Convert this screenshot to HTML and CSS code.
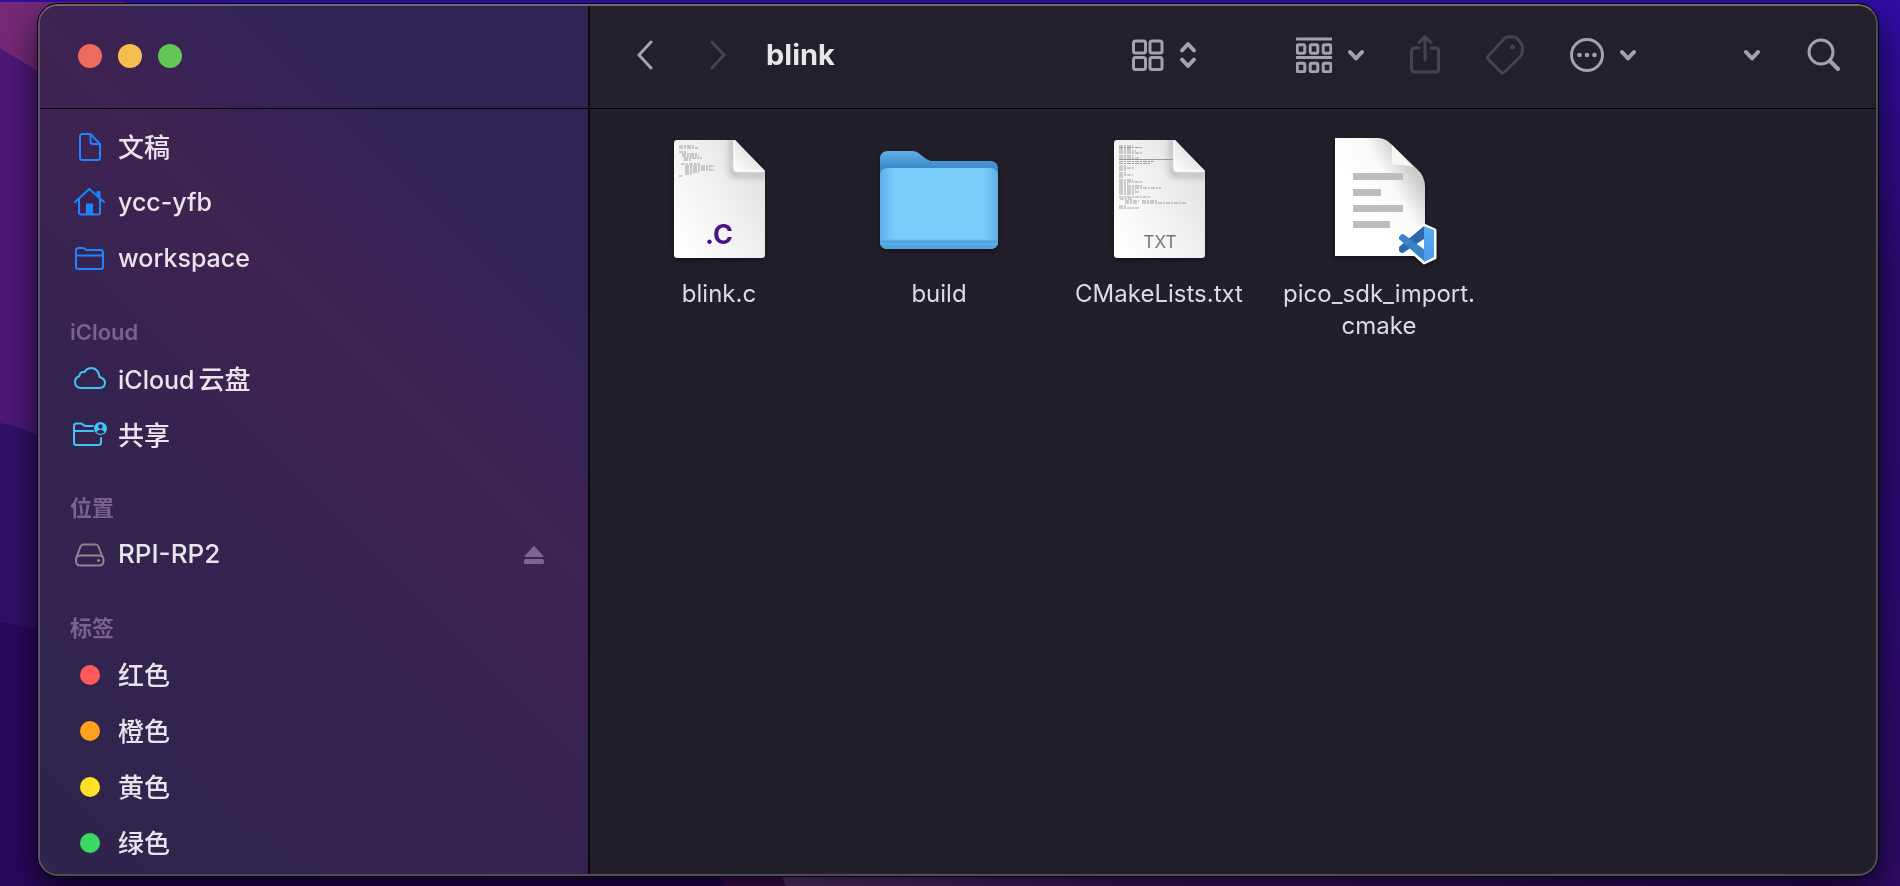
FILE: index.html
```html
<!DOCTYPE html>
<html lang="zh-CN">
<head>
    <meta charset="UTF-8">
    <meta name="viewport" content="width=device-width, initial-scale=1.0">
    <title>blink</title>
    <link rel="stylesheet" href="styles.css">
</head>
<body>

    <!-- Wallpaper -->
    <svg class="wallpaper" viewBox="0 0 1900 886" preserveAspectRatio="none" aria-hidden="true">
        <defs>
            <linearGradient id="wallRight" x1="0" y1="0" x2="0" y2="1">
                <stop offset="0" stop-color="#300da6"/>
                <stop offset="0.3" stop-color="#2d0a72"/>
                <stop offset="0.65" stop-color="#2c0a75"/>
                <stop offset="1" stop-color="#300a66"/>
            </linearGradient>
            <linearGradient id="wallBottom" x1="0" y1="0" x2="1" y2="0">
                <stop offset="0" stop-color="#6a4287"/>
                <stop offset="0.35" stop-color="#4a1a70"/>
                <stop offset="1" stop-color="#2d0b6a"/>
            </linearGradient>
        </defs>
        <rect width="1900" height="886" fill="url(#wallRight)"/>
        <path d="M0 2H125V886H0z" fill="#752978"/>
        <path d="M0 48L39 72 600 400V886H0z" fill="#4d1879"/>
        <path d="M0 423Q20 426 39 436L600 640V886H0z" fill="#311068"/>
        <path d="M0 622L39 630 720 800V886H0z" fill="#29085e"/>
        <path d="M718 860L724 886H800V860z" fill="#4a1260"/>
        <path d="M775 860L786 886H1800V860z" fill="url(#wallBottom)"/>
    </svg>

    <main class="window">

        <!-- Sidebar -->
        <aside class="sidebar">
            <div class="titlebar">
                <button class="light close" aria-label="关闭"></button>
                <button class="light minimize" aria-label="最小化"></button>
                <button class="light zoom" aria-label="缩放"></button>
            </div>

            <nav class="places">
                <a href="#documents" class="place blue">
                    <svg class="icon" viewBox="0 0 36 36"><path d="M18.500 5H10.500Q8 5 8 7.500V28.500Q8 31 10.500 31H25.500Q28 31 28 28.500V15L18.500 5V12.500Q18.500 15 21 15H28"/></svg>
                    <span>文稿</span>
                </a>
                <a href="#home" class="place blue">
                    <svg class="icon" viewBox="0 0 36 36"><path d="M3 17L17.300 4 32 17M7 14V27.500Q7 29.500 9 29.500H26Q28 29.500 28 27.500V14M25.500 11V7H27.500V13"/><path class="solid" d="M14 18.500H21V30H14z"/></svg>
                    <span class="latin">ycc-yfb</span>
                </a>
                <a href="#workspace" class="place blue">
                    <svg class="icon" viewBox="0 0 36 36"><path d="M4 25.500V9.500Q4 7 6.500 7H10.500Q12 7 13 8T15.500 9H28.500Q31 9 31 11.500V25.500Q31 28 28.500 28H6.500Q4 28 4 25.500zM4 14.500H31"/></svg>
                    <span class="latin">workspace</span>
                </a>

                <h2>iCloud</h2>
                <a href="#icloud" class="place cyan">
                    <svg class="icon" viewBox="0 0 36 36"><path d="M9.500 27Q3 27 3 21 3 16.500 7.500 15 7.500 10.500 12.500 11 15 7 19.500 7 26.500 7.500 27.500 16 33 17.500 33 22 32.500 27 27.500 27z"/></svg>
                    <span class="mixed"><span class="latin">iCloud</span>云盘</span>
                </a>
                <a href="#shared" class="place cyan">
                    <svg class="icon" viewBox="0 0 36 36"><path d="M21 9H14Q12.500 9 11.500 8T9 6.500H4.500Q2 6.500 2 9V25.500Q2 28 4.500 28H26.500Q29 28 29 25.500V21M2 14H21"/><circle class="solid" cx="28.500" cy="11.500" r="6.500"/><circle class="hole" cx="28.500" cy="9.500" r="2.200"/><path class="hole" d="M24.700 15.500Q25.500 12.800 28.500 12.800T32.300 15.500Q28.500 18 24.700 15.500z"/></svg>
                    <span>共享</span>
                </a>

                <h2>位置</h2>
                <div class="place gray">
                    <svg class="icon" viewBox="0 0 36 36"><path d="M4.500 20L8.500 9.500Q9.300 7.500 11.500 7.500H23.500Q25.700 7.500 26.500 9.500L30.500 20M8.500 18.500H27Q31.500 18.500 31.500 22.500V24Q31.500 28.500 27 28.500H8.500Q4 28.500 4 24V22.500Q4 18.500 8.500 18.500z"/><circle class="solid" cx="26.500" cy="23.500" r="1.600"/></svg>
                    <a href="#rpi">RPI-RP2</a>
                    <button class="eject" aria-label="推出">
                        <svg viewBox="0 0 20 20"><path d="M9.200 1.500Q10 .7 10.800 1.500L19 10.500Q19.800 12 18.500 12H1.500Q.2 12 1 10.500z"/><rect x="0" y="14" width="20" height="5" rx="1.500"/></svg>
                    </button>
                </div>

                <h2>标签</h2>
                <a href="#red" class="place"><i class="dot red"></i><span>红色</span></a>
                <a href="#orange" class="place"><i class="dot orange"></i><span>橙色</span></a>
                <a href="#yellow" class="place"><i class="dot yellow"></i><span>黄色</span></a>
                <a href="#green" class="place"><i class="dot green"></i><span>绿色</span></a>
            </nav>
        </aside>

        <section class="content">
            <!-- Toolbar -->
            <header class="toolbar">
                <div class="history">
                    <button aria-label="后退"><svg width="16" height="30"><path d="M14 2L2 15 14 28"/></svg></button>
                    <button aria-label="前进" disabled><svg width="16" height="30"><path d="M2 2L14 15 2 28"/></svg></button>
                </div>
                <h1>blink</h1>
                <button class="view" aria-label="显示方式">
                    <svg width="32" height="32"><rect x="1.500" y="2" width="12" height="12" rx="2"/><rect x="18" y="2" width="12" height="12" rx="2"/><rect x="1.500" y="18.500" width="12" height="12" rx="2"/><rect x="18" y="18.500" width="12" height="12" rx="2"/></svg>
                    <svg class="bold" width="16" height="28"><path d="M2 9.500L8 3 14 9.500M2 18.500L8 25 14 18.500"/></svg>
                </button>
                <div class="actions">
                    <button aria-label="分组">
                        <svg width="36" height="36"><path d="M1 2H35M1 20.500H35"/><rect x="1.200" y="7.700" width="7.600" height="8.600" rx="1.500"/><rect x="14.200" y="7.700" width="7.600" height="8.600" rx="1.500"/><rect x="27.200" y="7.700" width="7.600" height="8.600" rx="1.500"/><rect x="1.200" y="26.200" width="7.600" height="8.600" rx="1.500"/><rect x="14.200" y="26.200" width="7.600" height="8.600" rx="1.500"/><rect x="27.200" y="26.200" width="7.600" height="8.600" rx="1.500"/></svg>
                        <svg class="bold" width="16" height="12"><path d="M2 3L8 9.500 14 3"/></svg>
                    </button>
                    <button aria-label="共享" disabled>
                        <svg width="30" height="40"><path d="M9 13H4.500Q1.500 13 1.500 16V34Q1.500 37 4.500 37H25.500Q28.500 37 28.500 34V16Q28.500 13 25.500 13H21M15 25V2M9 7.500L15 1.500 21 7.500"/></svg>
                    </button>
                    <button aria-label="标签" disabled>
                        <svg width="38" height="40"><path d="M2 24Q1 22.500 2.300 21L18 3.700Q19.500 2 22 2H28Q30 2 31.300 3.700L35 8.500Q36.200 10 36.200 12V17Q36.200 19.500 34.500 21.500L18.500 37Q16.500 39 14.800 37z"/><circle cx="26.500" cy="12" r="1"/></svg>
                    </button>
                    <button aria-label="更多操作">
                        <svg width="34" height="34"><circle cx="17" cy="17" r="15.500"/><circle class="solid" cx="9.500" cy="17" r="2.300"/><circle class="solid" cx="17" cy="17" r="2.300"/><circle class="solid" cx="24.500" cy="17" r="2.300"/></svg>
                        <svg class="bold" width="16" height="12"><path d="M2 3L8 9.500 14 3"/></svg>
                    </button>
                </div>
                <button class="overflow" aria-label="展开"><svg class="bold" width="16" height="12"><path d="M2 3L8 9.500 14 3"/></svg></button>
                <button class="search" aria-label="搜索"><svg width="34" height="34"><circle cx="14" cy="14" r="12"/><path class="handle" d="M23 23L31 31"/></svg></button>
            </header>

            <!-- Files -->
            <ul class="files">
                <li><a href="#blink.c">
                    <svg class="thumb" viewBox="0 0 128 128">
                        <defs>
                            <linearGradient id="paper" x1="0" y1="0.8" x2="1" y2="0.1"><stop offset="0" stop-color="#fff"/><stop offset="0.5" stop-color="#f0f0f0"/><stop offset="1" stop-color="#dedede"/></linearGradient>
                            <linearGradient id="fold" x1="0" y1="1" x2="0.6" y2="0.4"><stop offset="0" stop-color="#fff"/><stop offset="1" stop-color="#e4e4e4"/></linearGradient>
                            <filter id="soft" x="-30%" y="-30%" width="160%" height="160%"><feGaussianBlur stdDeviation="3"/></filter>
                            <clipPath id="sheet"><path d="M22 5H80L110 36V120Q110 123 107 123H22Q19 123 19 120V8Q19 5 22 5z"/></clipPath>
                            <g id="page">
                                <path d="M22 5H80L110 36V120Q110 123 107 123H22Q19 123 19 120V8Q19 5 22 5z" fill="url(#paper)"/>
                                <g clip-path="url(#sheet)"><path d="M77 3V36Q77 39 80 40H112" fill="none" stroke="#aaa" stroke-width="4" filter="url(#soft)"/></g>
                                <path d="M78 5H80L110 36H82Q79 36 79 33V5z" fill="url(#fold)"/>
                                <path d="M79 6V33Q79 36 82 36H109" fill="none" stroke="#fff" stroke-width="1.300"/>
                            </g>
                        </defs>
                        <use href="#page"/>
                        <g class="code"><path d="M24 11H40M24 13H43M24 17H32M27 19H42M27 21H44M29 23H47M29 25H36M26 29H45M30 31H60M30 33H55M30 35H60M30 37H44M30 39H38M24 41H27"/></g>
                        <text class="ext-c" x="64" y="109">.C</text>
                    </svg>
                    <span>blink.c</span>
                </a></li>
                <li><a href="#build">
                    <svg class="thumb" viewBox="0 0 128 128">
                        <defs>
                            <linearGradient id="back" x1="0" y1="0" x2="0" y2="1"><stop offset="0" stop-color="#5faee4"/><stop offset="0.17" stop-color="#3f8acb"/><stop offset="1" stop-color="#4f9fdb"/></linearGradient>
                            <linearGradient id="edge" x1="0" y1="0" x2="1" y2="0"><stop offset="0" stop-color="#5cb0e8"/><stop offset="0.12" stop-color="#7accfb"/><stop offset="0.88" stop-color="#7accfb"/><stop offset="1" stop-color="#5cb0e8"/></linearGradient>
                        </defs>
                        <path d="M5 24Q5 16 13 16H37Q42 16 46 20T56 26H115Q123 26 123 34V106Q123 114 115 114H13Q5 114 5 106z" fill="url(#back)"/>
                        <path d="M5 41Q5 33 13 33H115Q123 33 123 41V106Q123 114 115 114H13Q5 114 5 106z" fill="url(#edge)"/>
                        <path d="M5 105H123V106Q123 114 115 114H13Q5 114 5 106z" fill="#4fa4df"/>
                        <path d="M5 105H123M5 109H123" stroke="#6bb8ec"/>
                    </svg>
                    <span>build</span>
                </a></li>
                <li><a href="#CMakeLists.txt">
                    <svg class="thumb" viewBox="0 0 128 128">
                        <use href="#page"/>
                        <g class="code"><path d="M24 11H38M24 12.500H48M24 14H36M24 16H41M24 18H48M24 21H38M24 23H44M24 26.500H59M24 28.500H56M24 31H31M24 33H40M24 35H31M24 38H32M24 40H38M24 42H29M24 45H38M24 47H48M24 49H33M24 51H48M24 53H66M24 55H41M24 57H45M24 59H39M24 62H56M25 64H38M30 66H44M47 66H62M30 68H43M47 68H91M24 71H32M24 73H44"/></g>
                        <path d="M24 24.500H78" stroke="#999"/>
                        <text class="ext-txt" x="65" y="113">TXT</text>
                    </svg>
                    <span>CMakeLists.txt</span>
                </a></li>
                <li><a href="#pico_sdk_import.cmake">
                    <svg class="thumb" viewBox="0 0 128 128">
                        <defs>
                            <linearGradient id="curl" x1="0.3" y1="0.6" x2="0.8" y2="0.2"><stop offset="0" stop-color="#fff"/><stop offset="0.6" stop-color="#fafafa"/><stop offset="1" stop-color="#ccc"/></linearGradient>
                            <linearGradient id="codeBlue" x1="0" y1="0" x2="0" y2="1"><stop offset="0" stop-color="#58b0ee"/><stop offset="1" stop-color="#4a98ec"/></linearGradient>
                        </defs>
                        <path d="M20 3H62Q70 3 75 8L102 34Q110 41 110 52V121H20z" fill="url(#curl)"/>
                        <path d="M77 10V28Q77 30 79 30H85Q92 30 98 32z" fill="#f6f6f6"/>
                        <path d="M38 38H88V45H38zM38 54H66V61H38zM38 70H88V77H38zM38 86H75V93H38z" fill="#bcbebd"/>
                        <path d="M109 90L120 95V123L109 128 97 117 88 119 92 106 87 96 97 101z" fill="#fff" stroke="#fff" stroke-width="3" stroke-linejoin="round"/>
                        <path d="M84 112L109 91V104L88 118Q86 118.500 84 116z" fill="#2b68a8"/>
                        <path d="M84 102L86 99.500Q87.500 98.500 89 99.500L110 115V127L84 104z" fill="#3983cb"/>
                        <path d="M109 91L119 95V122L109 127z" fill="url(#codeBlue)"/>
                    </svg>
                    <span>pico_sdk_import.<wbr>cmake</span>
                </a></li>
            </ul>
        </section>
    </main>

</body>
</html>
```
FILE: styles.css
```css
* {
    box-sizing: border-box;
}

body {
    margin: 0;
    min-height: 100vh;
    display: flex;
    padding: 4px 22px 10px 38px;
    overflow: hidden;
    font-family: Inter, "Noto Sans CJK SC", sans-serif;
    color: #e8e4ec;
}

/* Wallpaper sits behind the window */
.wallpaper {
    position: fixed;
    inset: 0;
    width: 100%;
    height: 100%;
    z-index: -1;
}

.window {
    flex: 1;
    display: flex;
    border: 2px solid #504c58;
    border-top-color: #6b6972;
    border-left-color: #625172;
    border-radius: 20px;
    background-color: #221e2a;
    overflow: hidden;
    box-shadow: 0 0 0 1px #000, 0 16px 36px rgba(0, 0, 0, 0.7);
}

button {
    padding: 0;
    border: none;
    background: none;
    color: inherit;
    font: inherit;
    display: flex;
    align-items: center;
}

a {
    color: inherit;
    text-decoration: none;
}

/* Sidebar */
.sidebar {
    flex: 0 0 550px;
    border-right: 2px solid #0a0810;
    background: linear-gradient(45deg, #2f244c 0%, #33244f 30%, #36234f 42%, #3b2351 52%, #3f2350 60%, #392356 68%, #302455 80%);
}

.titlebar {
    height: 103px;
    display: flex;
    align-items: center;
    gap: 16px;
    padding: 0 0 2px 38px;
    border-bottom: 1px solid #000;
}

.light {
    width: 24px;
    height: 24px;
    border-radius: 50%;
}

.close {
    background-color: #ed6a5e;
}

.minimize {
    background-color: #f5bf4f;
}

.zoom {
    background-color: #62c554;
}

.places {
    padding-top: 10px;
}

.places h2 {
    margin: 26px 0 0;
    padding-left: 30px;
    font-size: 22px;
    font-weight: 600;
    line-height: 38px;
    color: #79628f;
}

.place {
    display: flex;
    align-items: center;
    gap: 10px;
    height: 56px;
    padding: 0 44px 0 32px;
    font-size: 26px;
    font-weight: 500;
}

.place span,
.place a {
    padding-bottom: 3px;
}

.place .latin {
    font-size: 25px;
    padding-bottom: 2px;
}

.mixed .latin {
    margin-right: 4px;
}

.icon {
    width: 36px;
    height: 36px;
    fill: none;
    stroke: currentColor;
    stroke-width: 2;
    stroke-linejoin: round;
    stroke-linecap: round;
}

.blue .icon {
    color: #1e84ff;
}

.cyan .icon {
    color: #41c4f8;
}

.gray .icon {
    color: #8c8590;
}

.solid {
    fill: currentColor;
    stroke: none;
}

.hole {
    fill: #392350;
    stroke: none;
}

.eject {
    margin-left: auto;
    color: #7d6492;
}

.eject svg {
    width: 20px;
    height: 20px;
    fill: currentColor;
}

.dot {
    width: 20px;
    height: 20px;
    margin: 0 8px;
    border-radius: 50%;
}

.red {
    background-color: #ff5a5a;
}

.orange {
    background-color: #ffa01f;
}

.yellow {
    background-color: #ffe024;
}

.green {
    background-color: #3bd862;
}

/* Toolbar */
.content {
    flex: 1;
    min-width: 0;
}

.toolbar {
    height: 103px;
    display: flex;
    align-items: center;
    padding: 0 35px 4px 47px;
    border-bottom: 1px solid #000;
    background-color: #232029;
    color: #a6a2ad;
}

.toolbar svg {
    fill: none;
    stroke: currentColor;
    stroke-width: 3;
    stroke-linecap: round;
    stroke-linejoin: round;
}

.toolbar .bold {
    stroke-width: 4;
}

.toolbar .solid {
    fill: currentColor;
    stroke: none;
}

.toolbar .handle {
    stroke-width: 4;
}

.toolbar button {
    gap: 16px;
}

.toolbar button:disabled {
    color: #46424e;
}

.history {
    display: flex;
    gap: 57px;
}

.toolbar h1 {
    flex: 1;
    margin: 0 0 0 40px;
    font-size: 29px;
    line-height: 40px;
    font-weight: 700;
    color: #e8e6ea;
}

.view {
    margin-right: 100px;
}

.actions {
    display: flex;
    gap: 46px;
}

.overflow {
    margin: 0 47px 0 108px;
}

/* Files */
.files {
    margin: 0;
    padding: 26px 19px;
    list-style: none;
    display: grid;
    grid-template-columns: repeat(auto-fill, 220px);
}

.files a {
    display: flex;
    flex-direction: column;
    align-items: center;
    gap: 15px;
    font-size: 24px;
    line-height: 32px;
    text-align: center;
    color: #dddbe0;
}

.thumb {
    width: 128px;
    height: 128px;
    overflow: visible;
    filter: drop-shadow(0 2px 2px rgba(0, 0, 0, 0.4));
}

.code path {
    fill: none;
    stroke: #777;
    stroke-width: 1;
    stroke-dasharray: 4 1 2 1;
    opacity: 0.7;
}

.ext-c {
    font-size: 27px;
    font-weight: 700;
    text-anchor: middle;
    fill: #451589;
}

.ext-txt {
    font-size: 17px;
    text-anchor: middle;
    fill: #777;
}
```
